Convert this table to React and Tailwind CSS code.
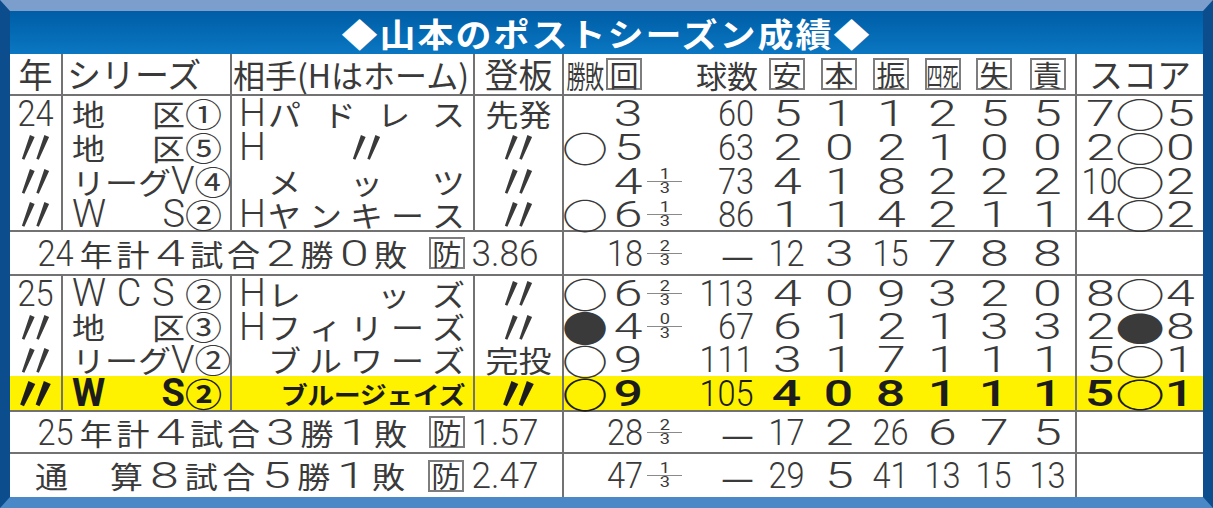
import React from "react";

const CJK = "font-['Noto_Sans_CJK_JP','Noto_Sans_CJK_SC',sans-serif]";
const NUM = "font-['Roboto','Liberation_Sans',sans-serif]";

const ROW = "grid grid-rows-[minmax(0,1fr)] grid-cols-[51px_169px_243px_89px_513px_128px]";
const SUB = "grid grid-rows-[minmax(0,1fr)] grid-cols-[42px_41px_44px_70px_52px_52px_52px_51px_52px_55px]";

function Wide({ c, bold, right }) {
  return (
    <span
      className={`inline-block ${NUM} text-[37px] leading-none scale-x-[1.4] ${right ? "origin-right" : "origin-center"} ${bold ? "font-medium" : "font-light"}`}
    >
      {c}
    </span>
  );
}

function Narrow({ c, bold, right }) {
  return (
    <span
      className={`inline-block ${NUM} text-[37px] leading-none scale-x-[0.88] ${right ? "origin-right" : "origin-center"} ${bold ? "font-normal" : "font-light"}`}
    >
      {c}
    </span>
  );
}

function Dash() {
  return <span className={`inline-block ${CJK} text-[37px] leading-none`}>—</span>;
}

function Num({ v, bold, right }) {
  if (!v) return null;
  if (v === "—") return <Dash />;
  if (v.length === 1) return <Wide c={v} bold={bold} right={right} />;
  return <Narrow c={v} bold={bold} right={right} />;
}

function Mark({ m, bold, big }) {
  return (
    <span className="inline-flex h-[28px] items-center justify-center">
      <span
        className={`inline-block ${CJK} text-[46px] leading-none ${big ? "scale-x-[1.08] scale-y-[0.74]" : "scale-y-[0.8]"} ${bold ? "font-bold" : ""}`}
      >
        {m}
      </span>
    </span>
  );
}

function Ditto({ bold }) {
  return (
    <span className="inline-flex h-[28px] items-center justify-center">
      <span className={`inline-block ${CJK} text-[50px] leading-none translate-y-[-3px] ${bold ? "font-bold" : ""}`}>〃</span>
    </span>
  );
}

function K({ t, bold, hidden }) {
  const circ = "①②③④⑤".includes(t);
  return (
    <span
      className={`inline-block ${CJK} ${circ ? "text-[37px]" : "text-[33px]"} leading-none scale-y-[0.9] ${bold ? "font-bold" : ""} ${hidden ? "invisible" : ""}`}
    >
      {t}
    </span>
  );
}

function Lat({ c, bold }) {
  return (
    <span className={`inline-block ${NUM} text-[38px] leading-none ${bold ? "font-bold" : "font-light"}`}>{c}</span>
  );
}

function Item({ s, bold }) {
  return (
    <span className="inline-flex items-center">
      {[...s].map((ch, i) =>
        /[A-Z]/.test(ch) ? <Lat key={i} c={ch} bold={bold} /> : <K key={i} t={ch} bold={bold} />
      )}
    </span>
  );
}

function Box({ children }) {
  return (
    <span className="inline-flex items-center justify-center w-[36px] h-[32px] border-2 border-[#7d7d7d] text-[29px] leading-none">
      {children}
    </span>
  );
}

function Frac({ n }) {
  return (
    <div className="flex flex-col items-center w-[35px]">
      <span className={`inline-block ${NUM} text-[14px] leading-[11px] scale-x-[1.3]`}>{n}</span>
      <span className="block w-full h-px bg-[#8a8a8a] my-[1px]" />
      <span className={`inline-block ${NUM} text-[14px] leading-[11px] scale-x-[1.3]`}>3</span>
    </div>
  );
}

function Stats({ wl, inn, frac, p, st, bold }) {
  return (
    <div className={`${SUB} h-full items-center`}>
      <div className="flex justify-center">{wl ? <Mark m={wl} bold={bold} /> : null}</div>
      <div className="flex justify-end pr-[4px]">
        <Num v={inn} bold={bold} right />
      </div>
      <div className="flex justify-start">{frac ? <Frac n={frac} /> : null}</div>
      <div className="flex justify-end pr-[7px]">
        <Num v={p} right />
      </div>
      {st.map((v, i) => (
        <div key={i} className="flex justify-center">
          <Num v={v} bold={bold} />
        </div>
      ))}
    </div>
  );
}

function Score({ sc, bold }) {
  if (!sc) return null;
  return (
    <div className="flex items-center justify-center h-full">
      <span className="w-[36px] flex justify-center">
        <Num v={sc[0]} bold={bold} />
      </span>
      <span className="w-[44px] flex justify-center">
        <Mark m={sc[1]} big bold={bold} />
      </span>
      <span className="w-[36px] flex justify-center">
        <Num v={sc[2]} bold={bold} />
      </span>
    </div>
  );
}

function Opp({ opp, bold }) {
  if (opp.bj) {
    return (
      <div className="flex items-center justify-end h-full pr-[8px]">
        <span className={`inline-block ${CJK} text-[27px] leading-none font-bold scale-y-[0.9] tracking-[-0.5px]`}>
          ブルージェイズ
        </span>
      </div>
    );
  }
  return (
    <div className="flex items-center h-full pl-[7px] pr-[8px]">
      <span className={`w-[29px] inline-block ${NUM} font-light text-[38px] leading-none ${opp.h ? "" : "invisible"}`}>H</span>
      <div className="flex-1 flex items-center justify-between">
        {opp.n.map((t, i) =>
          t === "〃" ? <Ditto key={i} /> : <K key={i} t={t || "ア"} hidden={!t} bold={bold} />
        )}
      </div>
    </div>
  );
}

const L = "border-l-2 border-[#727272]";

function DataRow({ r }) {
  const bold = !!r.hl;
  return (
    <div
      className={`${ROW} shrink-0 ${r.h} ${r.hl ? "bg-[#fff200] text-[#1c1c1c]" : ""} ${r.last ? "border-b-2 border-[#727272]" : ""}`}
    >
      <div className="flex items-center justify-center">
        {r.yr === "〃" ? <Ditto bold={bold} /> : <Narrow c={r.yr} />}
      </div>
      <div className={`${L} flex items-center justify-between pl-[9px] pr-[8px]`}>
        {r.series.map((s, i) => (
          <Item key={i} s={s} bold={bold} />
        ))}
      </div>
      <div className={L}>
        <Opp opp={r.opp} bold={bold} />
      </div>
      <div className={`${L} flex items-center justify-center`}>
        {r.role === "〃" ? <Ditto bold={bold} /> : <K t={r.role} />}
      </div>
      <div className={L}>
        <Stats wl={r.wl} inn={r.inn} frac={r.frac} p={r.p} st={r.st} bold={bold} />
      </div>
      <div className={L}>
        <Score sc={r.sc} bold={bold} />
      </div>
    </div>
  );
}

function TW({ c }) {
  return (
    <span className="w-[33px] flex justify-center">
      <Wide c={c} />
    </span>
  );
}

function TotalRow({ h, items, inn, frac, st, border }) {
  return (
    <div className={`grid grid-rows-[minmax(0,1fr)] grid-cols-[552px_513px_128px] shrink-0 ${h} ${border ? "border-b-2 border-[#727272]" : ""}`}>
      <div className="flex items-center justify-between pl-[25px] pr-[23px]">{items}</div>
      <div className={L}>
        <Stats wl="" inn={inn} frac={frac} p="—" st={st} />
      </div>
      <div className={L} />
    </div>
  );
}

function Era({ v }) {
  return <span className={`inline-block ${NUM} font-light text-[37px] leading-none scale-x-[0.95] origin-right`}>{v}</span>;
}

const rows24 = [
  { h: "h-[34px]", yr: "24", series: ["地", "区①"], opp: { h: true, n: ["パ", "ド", "レ", "ス"] }, role: "先発", wl: "", inn: "3", frac: null, p: "60", st: ["5", "1", "1", "2", "5", "5"], sc: ["7", "○", "5"] },
  { h: "h-[34px]", yr: "〃", series: ["地", "区⑤"], opp: { h: true, n: ["", "〃", ""] }, role: "〃", wl: "○", inn: "5", frac: null, p: "63", st: ["2", "0", "2", "1", "0", "0"], sc: ["2", "○", "0"] },
  { h: "h-[34px]", yr: "〃", series: ["リ", "ー", "グ", "V④"], opp: { h: false, n: ["メ", "ッ", "ツ"] }, role: "〃", wl: "", inn: "4", frac: "1", p: "73", st: ["4", "1", "8", "2", "2", "2"], sc: ["10", "○", "2"] },
  { h: "h-[34px]", last: true, yr: "〃", series: ["W", "S②"], opp: { h: true, n: ["ヤ", "ン", "キ", "ー", "ス"] }, role: "〃", wl: "○", inn: "6", frac: "1", p: "86", st: ["1", "1", "4", "2", "1", "1"], sc: ["4", "○", "2"] },
];

const rows25 = [
  { h: "h-[34px]", yr: "25", series: ["W", "C", "S", "②"], opp: { h: true, n: ["レ", "", "ッ", "ズ"] }, role: "〃", wl: "○", inn: "6", frac: "2", p: "113", st: ["4", "0", "9", "3", "2", "0"], sc: ["8", "○", "4"] },
  { h: "h-[33px]", yr: "〃", series: ["地", "区③"], opp: { h: true, n: ["フ", "ィ", "リ", "ー", "ズ"] }, role: "〃", wl: "●", inn: "4", frac: "0", p: "67", st: ["6", "1", "2", "1", "3", "3"], sc: ["2", "●", "8"] },
  { h: "h-[33px]", yr: "〃", series: ["リ", "ー", "グ", "V②"], opp: { h: false, n: ["ブ", "ル", "ワ", "ー", "ズ"] }, role: "完投", wl: "○", inn: "9", frac: null, p: "111", st: ["3", "1", "7", "1", "1", "1"], sc: ["5", "○", "1"] },
  { h: "h-[36px]", last: true, hl: true, yr: "〃", series: ["W", "S②"], opp: { bj: true }, role: "〃", wl: "○", inn: "9", frac: null, p: "105", st: ["4", "0", "8", "1", "1", "1"], sc: ["5", "○", "1"] },
];

export default function App() {
  return (
    <div
      className={`w-[1213px] h-[508px] flex flex-col overflow-hidden bg-white text-[#3a3a3a] ${CJK} border-t-[11px] border-b-[11px] border-l-[10px] border-r-[10px] border-t-[#7b9ecd] border-b-[#4a88c8] border-l-[#0b4d8d] border-r-[#0b4d8d]`}
    >
      <div className="h-[43px] shrink-0 flex items-center justify-center bg-linear-to-b from-[#005da6] to-[#0b77c2]">
        <span className="inline-block text-white font-bold text-[36px] leading-none tracking-[2px] scale-y-[0.9]">
          ◆山本のポストシーズン成績◆
        </span>
      </div>

      <div className={`${ROW} h-[42px] shrink-0 border-b-2 border-[#727272]`}>
        <div className="flex items-center justify-center text-[34px] leading-none">年</div>
        <div className={`${L} flex items-center pl-[4px] text-[34px] leading-none`}>シリーズ</div>
        <div className={`${L} flex items-center pl-[1px] text-[32px] leading-none`}>相手(Hはホーム)</div>
        <div className={`${L} flex items-center justify-center text-[34px] leading-none`}>登板</div>
        <div className={`${L} grid grid-rows-[minmax(0,1fr)] grid-cols-[42px_41px_114px_52px_52px_52px_51px_52px_55px] items-center`}>
          <div className="flex justify-center">
            <span className="inline-block text-[19px] leading-none scale-y-[1.6] tracking-[-0.5px]">勝敗</span>
          </div>
          <div className="flex justify-start">
            <Box>回</Box>
          </div>
          <div className="flex justify-end pr-[3px] text-[31px] leading-none">球数</div>
          <div className="flex justify-center"><Box>安</Box></div>
          <div className="flex justify-center"><Box>本</Box></div>
          <div className="flex justify-center"><Box>振</Box></div>
          <div className="flex justify-center">
            <Box>
              <span className="inline-block text-[16px] leading-none scale-y-[1.65]">四死</span>
            </Box>
          </div>
          <div className="flex justify-center"><Box>失</Box></div>
          <div className="flex justify-center"><Box>責</Box></div>
        </div>
        <div className={`${L} flex items-center justify-center text-[34px] leading-none`}>スコア</div>
      </div>

      {rows24.map((r, i) => (
        <DataRow key={i} r={r} />
      ))}

      <TotalRow
        h="h-[44px]"
        border
        inn="18"
        frac="2"
        st={["12", "3", "15", "7", "8", "8"]}
        items={[
          <Narrow key="a" c="24" />,
          <K key="b" t="年" />,
          <K key="c" t="計" />,
          <TW key="d" c="4" />,
          <K key="e" t="試" />,
          <K key="f" t="合" />,
          <TW key="g" c="2" />,
          <K key="h" t="勝" />,
          <TW key="i" c="0" />,
          <K key="j" t="敗" />,
          <span key="k" className="w-[14px]" />,
          <Box key="l">防</Box>,
          <Era key="m" v="3.86" />,
        ]}
      />

      {rows25.map((r, i) => (
        <DataRow key={i} r={r} />
      ))}

      <TotalRow
        h="h-[42px]"
        border
        inn="28"
        frac="2"
        st={["17", "2", "26", "6", "7", "5"]}
        items={[
          <Narrow key="a" c="25" />,
          <K key="b" t="年" />,
          <K key="c" t="計" />,
          <TW key="d" c="4" />,
          <K key="e" t="試" />,
          <K key="f" t="合" />,
          <TW key="g" c="3" />,
          <K key="h" t="勝" />,
          <TW key="i" c="1" />,
          <K key="j" t="敗" />,
          <span key="k" className="w-[14px]" />,
          <Box key="l">防</Box>,
          <Era key="m" v="1.57" />,
        ]}
      />

      <TotalRow
        h="h-[43px]"
        inn="47"
        frac="1"
        st={["29", "5", "41", "13", "15", "13"]}
        items={[
          <K key="a" t="通" />,
          <K key="b" t="算" hidden />,
          <K key="c" t="算" />,
          <TW key="d" c="8" />,
          <K key="e" t="試" />,
          <K key="f" t="合" />,
          <TW key="g" c="5" />,
          <K key="h" t="勝" />,
          <TW key="i" c="1" />,
          <K key="j" t="敗" />,
          <span key="k" className="w-[14px]" />,
          <Box key="l">防</Box>,
          <Era key="m" v="2.47" />,
        ]}
      />
    </div>
  );
}
